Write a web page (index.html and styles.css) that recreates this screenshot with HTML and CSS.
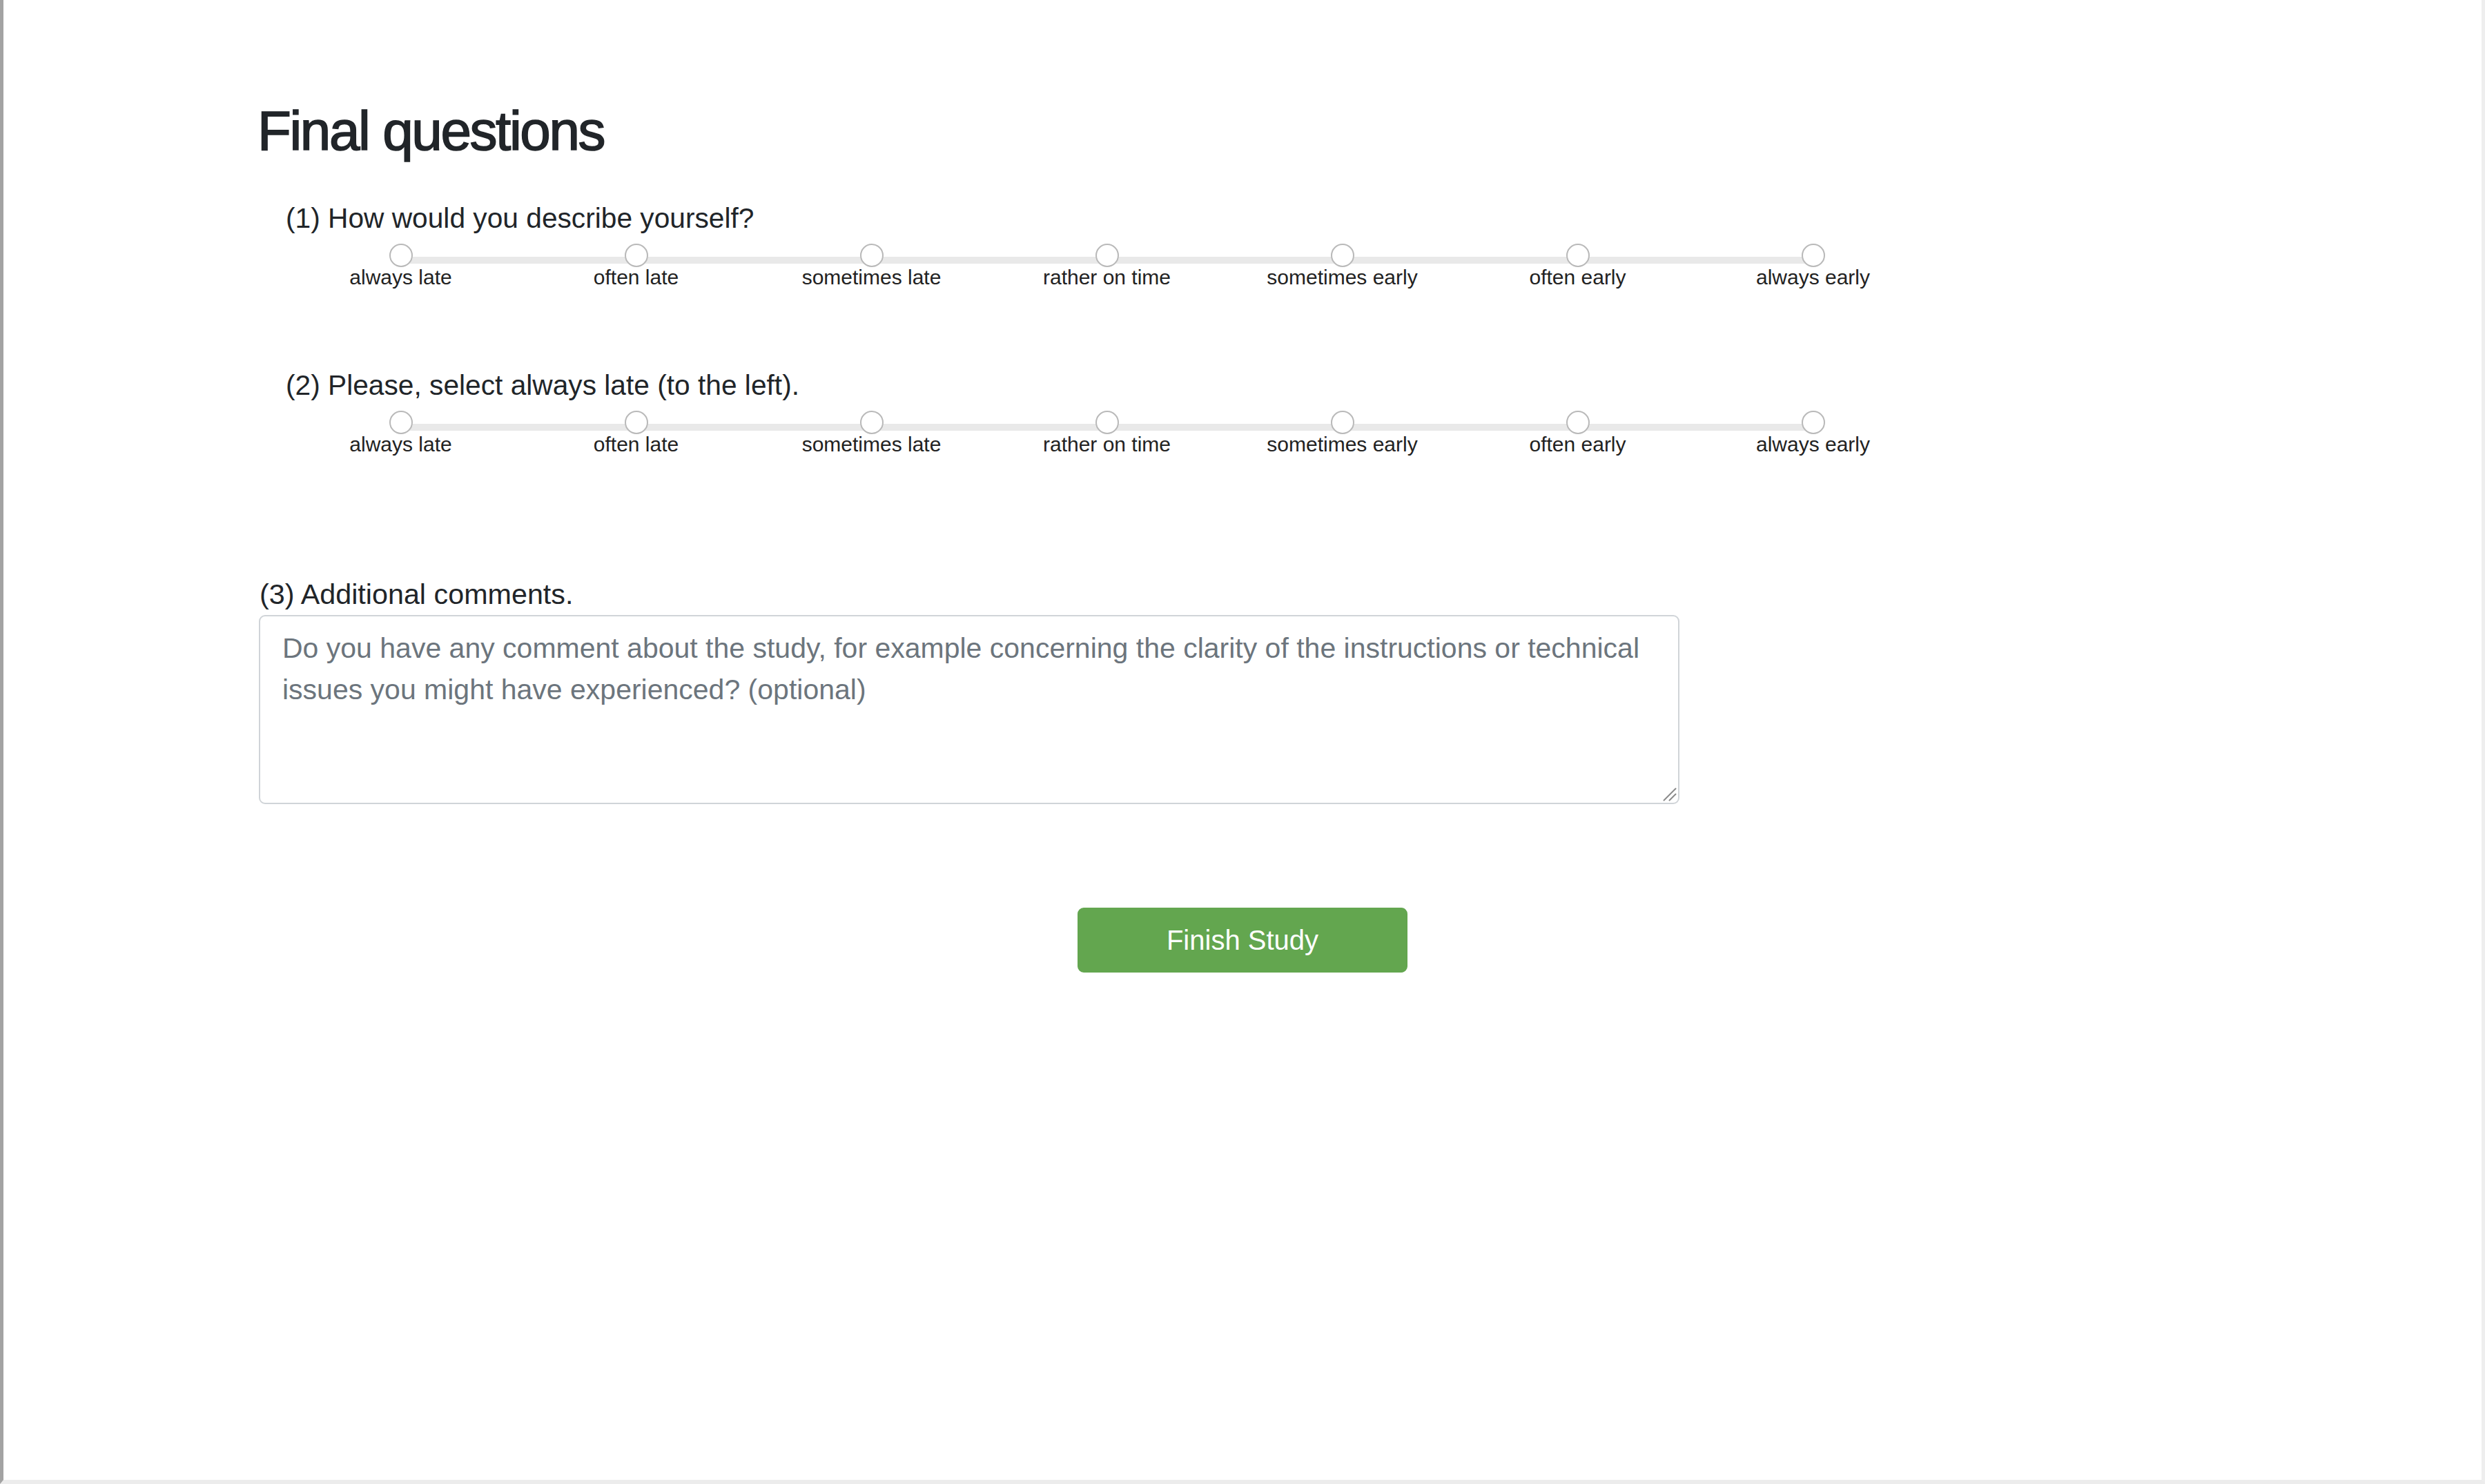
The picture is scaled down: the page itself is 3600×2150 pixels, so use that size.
FILE: index.html
```html
<!DOCTYPE html>
<html lang="en">
<head>
<meta charset="utf-8">
<title>Final questions</title>
<link rel="stylesheet" href="styles.css">
</head>
<body>
<div class="frame">
  <div class="content">
    <h1 class="title">Final questions</h1>

    <section class="q q-first">
      <p class="q-text">(1) How would you describe yourself?</p>
      <div class="scale">
        <label class="opt"><input type="radio" name="q1" class="dot"><span class="opt-label">always late</span></label>
        <label class="opt"><input type="radio" name="q1" class="dot"><span class="opt-label">often late</span></label>
        <label class="opt"><input type="radio" name="q1" class="dot"><span class="opt-label">sometimes late</span></label>
        <label class="opt"><input type="radio" name="q1" class="dot"><span class="opt-label">rather on time</span></label>
        <label class="opt"><input type="radio" name="q1" class="dot"><span class="opt-label">sometimes early</span></label>
        <label class="opt"><input type="radio" name="q1" class="dot"><span class="opt-label">often early</span></label>
        <label class="opt"><input type="radio" name="q1" class="dot"><span class="opt-label">always early</span></label>
      </div>
    </section>

    <section class="q q-second">
      <p class="q-text">(2) Please, select always late (to the left).</p>
      <div class="scale">
        <label class="opt"><input type="radio" name="q2" class="dot"><span class="opt-label">always late</span></label>
        <label class="opt"><input type="radio" name="q2" class="dot"><span class="opt-label">often late</span></label>
        <label class="opt"><input type="radio" name="q2" class="dot"><span class="opt-label">sometimes late</span></label>
        <label class="opt"><input type="radio" name="q2" class="dot"><span class="opt-label">rather on time</span></label>
        <label class="opt"><input type="radio" name="q2" class="dot"><span class="opt-label">sometimes early</span></label>
        <label class="opt"><input type="radio" name="q2" class="dot"><span class="opt-label">often early</span></label>
        <label class="opt"><input type="radio" name="q2" class="dot"><span class="opt-label">always early</span></label>
      </div>
    </section>

    <section class="q-comment">
      <label class="comment-label" for="comments">(3) Additional comments.</label>
      <div class="ta-wrap">
        <textarea id="comments" class="comment-box" rows="4" placeholder="Do you have any comment about the study, for example concerning the clarity of the instructions or technical issues you might have experienced? (optional)"></textarea>
        <svg class="grip" width="20" height="20" viewBox="0 0 20 20" aria-hidden="true">
          <line x1="1.5" y1="18.5" x2="18.5" y2="1.5" stroke="#8a8a8a" stroke-width="2" stroke-linecap="round"/>
          <line x1="9.5" y1="18.5" x2="18.5" y2="9.5" stroke="#8a8a8a" stroke-width="2" stroke-linecap="round"/>
        </svg>
      </div>
    </section>
  </div>

  <div class="actions">
    <button type="button" class="finish">Finish Study</button>
  </div>
</div>
</body>
</html>
```

FILE: styles.css
```css
html, body {
  margin: 0;
  padding: 0;
  background: #ffffff;
}

body {
  font-family: "Liberation Sans", Arial, Helvetica, sans-serif;
  color: #212529;
}

.frame {
  box-sizing: border-box;
  height: 2150px;
  border-left: 5px solid #a3a3a3;
  border-right: 5px solid #eeeeee;
  border-bottom: 6px solid #ececec;
  background: #ffffff;
}

.content {
  padding: 142px 0 0 370px;
}

.title {
  margin: 0 0 0 -2px;
  font-size: 80px;
  line-height: 96px;
  font-weight: 400;
  letter-spacing: -2.4px;
  -webkit-text-stroke: 1.6px #212529;
  color: #212529;
}

.q {
  margin-left: 35px;
}

.q-first {
  margin-top: 48px;
}

.q-second {
  margin-top: 110px;
}

.q-text {
  margin: 0 0 0 4px;
  font-size: 40.7px;
  line-height: 60px;
  color: #212529;
}

.scale {
  position: relative;
  display: grid;
  grid-template-columns: repeat(7, 341px);
  width: 2387px;
  margin-top: 7px;
}

.scale::before {
  content: "";
  position: absolute;
  left: 170px;
  right: 170px;
  top: 19px;
  height: 10px;
  background: #e9e9e9;
  border-radius: 2px;
}

.opt {
  position: relative;
  display: flex;
  flex-direction: column;
  align-items: center;
}

.dot {
  -webkit-appearance: none;
  appearance: none;
  box-sizing: border-box;
  position: relative;
  z-index: 1;
  width: 34px;
  height: 34px;
  margin: 0;
  border: 2px solid #b9b9b9;
  border-radius: 50%;
  background: #ffffff;
}

.opt-label {
  margin-top: -1px;
  font-size: 30px;
  line-height: 32px;
  color: #222222;
  white-space: nowrap;
}

.q-comment {
  margin-top: 177px;
}

.comment-label {
  display: block;
  margin: 0 0 6px 1px;
  font-size: 41.3px;
  line-height: 48px;
  color: #212529;
}

.ta-wrap {
  position: relative;
  width: 2058px;
}

.comment-box {
  display: block;
  box-sizing: border-box;
  width: 2058px;
  height: 274px;
  margin: 0;
  padding: 16px 30px 16px 32px;
  border: 2px solid #d0d4d8;
  border-radius: 9px;
  font-family: "Liberation Sans", Arial, Helvetica, sans-serif;
  font-size: 41px;
  line-height: 60px;
  color: #495057;
  background: #ffffff;
  resize: none;
  outline: none;
}

.comment-box::placeholder {
  color: #6c757d;
  opacity: 1;
}

.grip {
  position: absolute;
  right: 4px;
  bottom: 4px;
}

.actions {
  display: flex;
  justify-content: center;
  margin-top: 150px;
}

.finish {
  box-sizing: border-box;
  width: 478px;
  height: 94px;
  padding: 15px 0;
  border: 2px solid #63a64f;
  border-radius: 9px;
  background: #63a64f;
  color: #ffffff;
  font-family: "Liberation Sans", Arial, Helvetica, sans-serif;
  font-size: 40px;
  line-height: 60px;
  cursor: pointer;
}
```
